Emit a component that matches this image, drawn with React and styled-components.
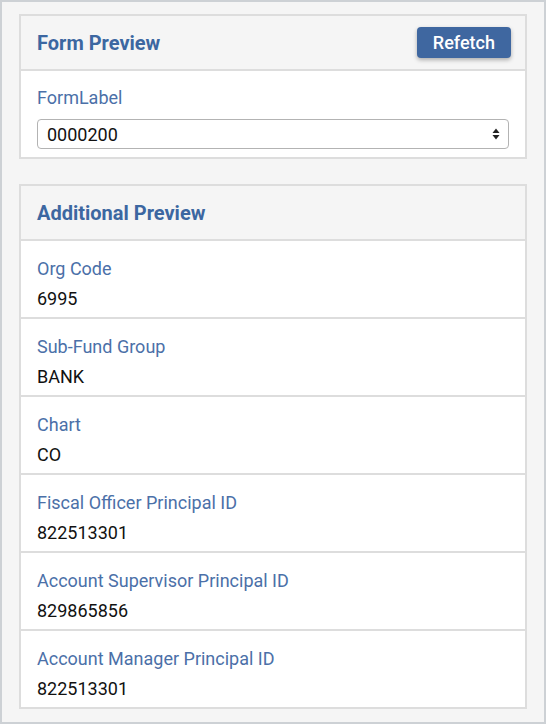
import React from "react";
import styled, { createGlobalStyle } from "styled-components";

const GlobalStyle = createGlobalStyle`
  html, body { margin: 0; padding: 0; }
  body {
    font-family: Roboto, "Noto Sans", Arial, sans-serif;
    background: #f5f5f5;
  }
  * { box-sizing: border-box; }
`;

const Frame = styled.div`
  height: 100vh;
  border: 2px solid #cdd1d5;
  background: #f5f5f5;
  padding: 12px 17px;
  display: flex;
  flex-direction: column;
  gap: 25px;
`;

const Card = styled.section`
  border: 2px solid #dddddd;
  background: #ffffff;
  display: flex;
  flex-direction: column;
`;

const CardHeader = styled.header`
  min-height: 55px;
  padding: 11px 14px 11px 16px;
  background: #f5f5f5;
  border-bottom: 2px solid #dddddd;
  display: flex;
  align-items: center;
  justify-content: space-between;
`;

const Title = styled.h2`
  margin: 0;
  font-size: 20px;
  font-weight: 700;
  color: #3c67a1;
  line-height: 26px;
`;

const Button = styled.button`
  font-family: inherit;
  font-size: 18px;
  font-weight: 500;
  color: #ffffff;
  background: #3f67a0;
  border: none;
  border-radius: 4px;
  height: 31px;
  padding: 0 16px;
  box-shadow: 0 2px 4px rgba(0, 0, 0, 0.3);
  cursor: pointer;
`;

const FormBody = styled.div`
  padding: 14px 16px 8px 16px;
  display: flex;
  flex-direction: column;
  gap: 8px;
`;

const Label = styled.div`
  font-size: 18px;
  line-height: 26px;
  color: #4b70a8;
`;

const SelectWrap = styled.div`
  position: relative;
`;

const Select = styled.select`
  appearance: none;
  -webkit-appearance: none;
  width: 100%;
  height: 30px;
  font-family: inherit;
  font-size: 18px;
  color: #111111;
  background: #ffffff;
  border: 1.5px solid #b3b3b3;
  border-radius: 4px;
  padding: 0 28px 0 9px;
  outline: none;
`;

const Caret = styled.svg`
  position: absolute;
  right: 9px;
  top: 50%;
  transform: translateY(-50%);
  pointer-events: none;
`;

const Row = styled.div`
  padding: 15px 16px 5px 16px;
  min-height: 76px;
  display: flex;
  flex-direction: column;
  gap: 4px;
  & + & {
    border-top: 2px solid #dddddd;
  }
`;

const Value = styled.div`
  font-size: 18px;
  line-height: 26px;
  color: #111111;
`;

const fields = [
  { label: "Org Code", value: "6995" },
  { label: "Sub-Fund Group", value: "BANK" },
  { label: "Chart", value: "CO" },
  { label: "Fiscal Officer Principal ID", value: "822513301" },
  { label: "Account Supervisor Principal ID", value: "829865856" },
  { label: "Account Manager Principal ID", value: "822513301" },
];

export default function App() {
  return (
    <>
      <GlobalStyle />
      <Frame>
        <Card>
          <CardHeader>
            <Title>Form Preview</Title>
            <Button>Refetch</Button>
          </CardHeader>
          <FormBody>
            <Label>FormLabel</Label>
            <SelectWrap>
              <Select defaultValue="0000200">
                <option value="0000200">0000200</option>
              </Select>
              <Caret width="8" height="12" viewBox="0 0 8 12">
                <path d="M4 0.5 L7.5 5 H0.5 Z" fill="#222" />
                <path d="M4 11.5 L7.5 7 H0.5 Z" fill="#222" />
              </Caret>
            </SelectWrap>
          </FormBody>
        </Card>
        <Card>
          <CardHeader>
            <Title>Additional Preview</Title>
          </CardHeader>
          {fields.map((f) => (
            <Row key={f.label}>
              <Label>{f.label}</Label>
              <Value>{f.value}</Value>
            </Row>
          ))}
        </Card>
      </Frame>
    </>
  );
}
